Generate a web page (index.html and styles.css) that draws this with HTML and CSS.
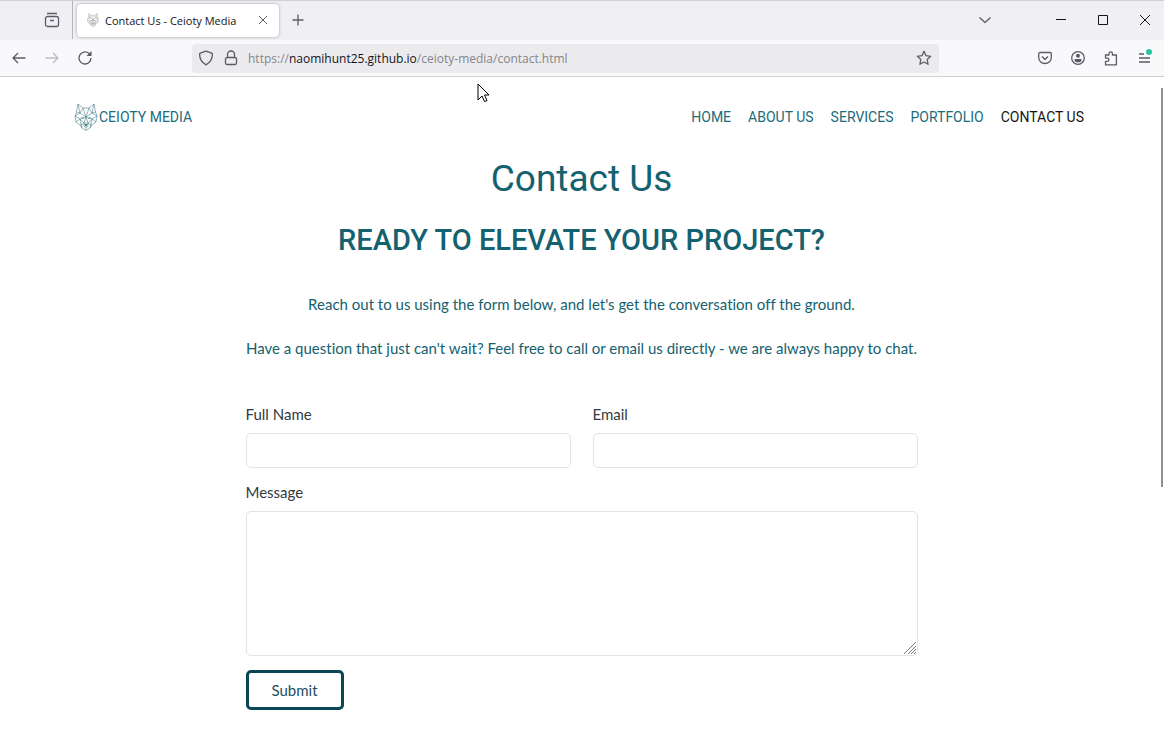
FILE: index.html
```html
<!DOCTYPE html>
<html lang="en">
<head>
<meta charset="utf-8">
<meta name="viewport" content="width=device-width, initial-scale=1">
<title>Contact Us - Ceioty Media</title>
<link rel="stylesheet" href="styles.css">
</head>
<body>
<svg class="symbols" aria-hidden="true">
  <symbol id="wolf" viewBox="0 0 24 28">
    <path d="M4 1 9 5h6l5-4 1.500 8 1.500 4-1 6-4 3-2 3-4 2.500L8 25l-2-3-4-3-1-6 1.500-4zM4 1l2 9 6 4 6-4 2-9M2.500 9l3.500 1-5 3 5 3 6-2 6 2 5-3-5-3 3.500-1M9 5l3 9 3-9M2 19l4-3 2 9M22 19l-4-3-2 9M6 16l4 4M18 16l-4 4M12 14l-2 6v3l2 2 2-2v-3zM10 20h4M12 25v2M6 10l3-5M18 10l-3-5M6 22l4-2M18 22l-4-2" fill="none" stroke="currentColor" stroke-width=".6" stroke-linejoin="round"/>
    <path d="m7 14 3 1-1 1zM17 14l-3 1 1 1zM10 21h4l-2 3z" fill="currentColor"/>
  </symbol>
</svg>

<header class="browser">
  <div class="tabstrip">
    <div class="tabstrip-start">
      <button class="icon-button" aria-label="Firefox View">
        <svg width="16" height="16" viewBox="0 0 16 16"><path d="M3 1.500h10M3.500 4.500h9a2 2 0 0 1 2 2v6a2 2 0 0 1-2 2h-9a2 2 0 0 1-2-2v-6a2 2 0 0 1 2-2zM6 8.500h4"/></svg>
      </button>
    </div>
    <div class="tab">
      <svg class="tab-favicon" width="12" height="14"><use href="#wolf"/></svg>
      <span class="tab-title">Contact Us - Ceioty Media</span>
      <button class="icon-button tab-close" aria-label="Close tab">
        <svg width="10" height="10" viewBox="0 0 10 10"><path d="m1 1 8 8M9 1 1 9"/></svg>
      </button>
    </div>
    <button class="icon-button new-tab" aria-label="New tab">
      <svg width="12" height="12" viewBox="0 0 12 12"><path d="M6 .5v11M.5 6h11"/></svg>
    </button>
    <div class="window-controls">
      <button class="icon-button tab-list" aria-label="List all tabs">
        <svg width="12" height="12" viewBox="0 0 12 12"><path d="m.5 3.500 5.500 5 5.500-5"/></svg>
      </button>
      <button class="icon-button caption" aria-label="Minimize"><svg width="10" height="10" viewBox="0 0 10 10"><path d="M0 4.500h10"/></svg></button>
      <button class="icon-button caption" aria-label="Maximize"><svg width="10" height="10" viewBox="0 0 10 10"><path d="M.5.5h9v9h-9z"/></svg></button>
      <button class="icon-button caption" aria-label="Close window"><svg width="10" height="10" viewBox="0 0 10 10"><path d="m0 0 10 10M10 0 0 10"/></svg></button>
    </div>
  </div>

  <div class="toolbar">
    <div class="toolbar-nav">
      <button class="icon-button" aria-label="Back"><svg width="16" height="16" viewBox="0 0 16 16"><path d="M14.500 8H2M7 3 2 8l5 5"/></svg></button>
      <button class="icon-button" aria-label="Forward" disabled><svg width="16" height="16" viewBox="0 0 16 16"><path d="M1.500 8H14M9 3l5 5-5 5"/></svg></button>
      <button class="icon-button" aria-label="Reload"><svg width="16" height="16" viewBox="0 0 16 16"><path d="M14 8a6 6 0 1 1-2-4.500l2 2"/><path class="solid" d="M14.500 1v5h-5z"/></svg></button>
    </div>
    <div class="urlbar">
      <svg class="icon" width="16" height="16" viewBox="0 0 16 16"><path d="m8 1.200 5.700 2c.4.200.7.500.7.900 0 5-2 8.500-6.400 10.700C3.600 12.600 1.600 9.100 1.600 4.100c0-.4.300-.7.700-.9z"/></svg>
      <svg class="icon" width="16" height="16" viewBox="0 0 16 16"><path d="M4.500 7.500V4.500a3.500 3.500 0 0 1 7 0v3M4 7.500h8a1.500 1.500 0 0 1 1.500 1.500v4a1.500 1.500 0 0 1-1.500 1.500H4A1.500 1.500 0 0 1 2.500 13V9A1.500 1.500 0 0 1 4 7.500z"/></svg>
      <div class="url" role="textbox" contenteditable="true" spellcheck="false" aria-label="Address">https://<span class="url-domain">naomihunt25.github.io</span>/ceioty-media/contact.html</div>
      <button class="icon-button star" aria-label="Bookmark this page"><svg width="16" height="16" viewBox="0 0 16 16"><path d="m8 1.300 2 4.400 4.700.6-3.500 3.200.9 4.800L8 12l-4.100 2.300.9-4.800L1.300 6.300l4.700-.6z"/></svg></button>
    </div>
    <div class="toolbar-end">
      <button class="icon-button" aria-label="Save to Pocket"><svg width="14" height="14" viewBox="0 0 14 14"><path d="M2 1.500h10a1.300 1.300 0 0 1 1.300 1.300V6.500a6.300 6 0 0 1-12.600 0V2.800A1.300 1.300 0 0 1 2 1.500zM4 5.500l3 3 3-3"/></svg></button>
      <button class="icon-button" aria-label="Account"><svg width="14" height="14" viewBox="0 0 14 14"><circle cx="7" cy="7" r="6.300"/><circle class="solid" cx="7" cy="4.800" r="2"/><path class="solid" d="M3.500 8h7v1a3.500 2.300 0 0 1-7 0z"/></svg></button>
      <button class="icon-button" aria-label="Extensions"><svg width="14" height="15" viewBox="0 0 14 15"><path d="M5 4V2.500a1.700 1.700 0 0 1 3.400 0V4h4v9.800H1.500v-3.500h1.800a1.600 1.600 0 0 0 0-3.200H1.500V4z"/></svg></button>
      <button class="icon-button menu" aria-label="Open application menu"><svg width="14" height="14" viewBox="0 0 14 14"><path d="M2 3h5M2 7h11M2 11h11"/></svg><span class="menu-badge"></span></button>
    </div>
  </div>
</header>

<div class="page">
  <nav class="site-nav">
    <a class="brand" href="#"><svg width="24" height="28"><use href="#wolf"/></svg><span>CEIOTY MEDIA</span></a>
    <div class="site-links">
      <a href="#">HOME</a>
      <a href="#">ABOUT US</a>
      <a href="#">SERVICES</a>
      <a href="#">PORTFOLIO</a>
      <a href="#" class="current" aria-current="page">CONTACT US</a>
    </div>
  </nav>

  <main class="content">
    <h1>Contact Us</h1>
    <h2>READY TO ELEVATE YOUR PROJECT?</h2>
    <p>Reach out to us using the form below, and let's get the conversation off the ground.</p>
    <p>Have a question that just can't wait? Feel free to call or email us directly - we are always happy to chat.</p>

    <form class="contact-form">
      <div class="field">
        <label for="name">Full Name</label>
        <input id="name" type="text">
      </div>
      <div class="field">
        <label for="email">Email</label>
        <input id="email" type="email">
      </div>
      <div class="field field-wide">
        <label for="message">Message</label>
        <div class="message-box">
          <textarea id="message"></textarea>
          <svg class="grip" width="14" height="14" viewBox="0 0 14 14"><path d="M1 13 13 1M5 13l8-8M8 13l5-5M11 13l2-2"/></svg>
        </div>
      </div>
      <button class="submit" type="submit">Submit</button>
    </form>
  </main>
  <div class="scroll-thumb"></div>
</div>

<svg class="pointer" width="13" height="20" viewBox="0 0 13 20"><path d="M1 1v16l4-4 2.500 5.500 2.500-1L7.500 12H12z"/></svg>
</body>
</html>
```
FILE: styles.css
```css
* { box-sizing: border-box; }

body {
  margin: 0;
  min-height: 100vh;
  display: flex;
  flex-direction: column;
  background: #fff;
  font-family: "Lato", sans-serif;
  font-variant-ligatures: none;
}

.symbols { position: absolute; width: 0; height: 0; }

/* Browser window */
.browser {
  font-family: "Open Sans", sans-serif;
  font-size: 12px;
  color: #15141a;
  border-top: 1px solid #cfcfd4;
  border-bottom: 1px solid #cfcfd3;
}

.icon-button {
  display: inline-flex;
  align-items: center;
  justify-content: center;
  padding: 0;
  border: 0;
  background: none;
  color: #5b5b66;
}
.icon-button:disabled { color: #bcbcc2; }

.icon-button svg,
.icon {
  flex: none;
  fill: none;
  stroke: currentColor;
  stroke-width: 1.3;
  stroke-linejoin: round;
}
.icon-button .solid { fill: currentColor; stroke: none; }

.tabstrip {
  display: flex;
  align-items: center;
  height: 39px;
  padding-bottom: 1px;
  background: #f0f0f4;
}

.tabstrip-start {
  display: flex;
  align-items: center;
  align-self: stretch;
  justify-content: flex-end;
  width: 73px;
  padding-right: 12px;
  border-right: 1px solid #b5b5bb;
}

.tab {
  display: flex;
  align-items: center;
  gap: 6px;
  width: 202px;
  height: 33px;
  margin-left: 4px;
  padding: 0 10px;
  border-radius: 4px;
  background: #fff;
  box-shadow: 0 0 3px rgba(0, 0, 0, .35);
}
.tab-favicon { color: #777; }
.tab-title { flex: 1; font-size: 11px; white-space: nowrap; }
.tab-close { width: 12px; }
.tab-close svg { stroke-width: 1; }
.new-tab { width: 38px; }

.window-controls { display: flex; margin-left: auto; }
.tab-list { width: 42px; margin-right: 34px; }
.caption { width: 42px; color: #15141a; }
.caption svg { stroke-width: 1; }
.window-controls .caption:last-child { margin-right: -2px; }

.toolbar {
  display: flex;
  align-items: center;
  height: 36px;
  background: #f9f9fb;
}

.toolbar-nav { display: flex; width: 192px; padding-left: 11px; gap: 17px; }

.urlbar {
  display: flex;
  align-items: center;
  flex: 1;
  gap: 9px;
  height: 29px;
  padding: 0 7px 0 6px;
  border-radius: 4px;
  background: #ebebee;
  color: #5b5b66;
}
.url {
  flex: 1;
  color: #85858c;
  font-size: 12px;
  white-space: nowrap;
  outline: none;
}
.url-domain { color: #15141a; }

.toolbar-end {
  display: flex;
  justify-content: flex-end;
  align-items: center;
  gap: 19px;
  width: 225px;
  padding-right: 13px;
}
.menu { position: relative; }
.menu-badge {
  position: absolute;
  top: -2px;
  right: -1px;
  width: 6px;
  height: 6px;
  border-radius: 50%;
  background: #2ac3a2;
}

/* Site */
.page { position: relative; flex: 1; padding: 24px 75px 24px 74px; }

.site-nav {
  display: flex;
  align-items: center;
  justify-content: space-between;
  padding-right: 5px;
  font-family: "Roboto", sans-serif;
  font-size: 14px;
  line-height: 32px;
}
.site-nav a { color: #1b6c7c; text-decoration: none; }
.brand { display: flex; align-items: center; gap: 1px; }
.brand svg { color: #4d858c; }
.site-links { display: flex; gap: 17px; }
.site-nav .current { color: #151515; }

.content {
  max-width: 674px;
  margin: 0 auto;
  text-align: center;
  color: #14616f;
}

h1, h2 { margin: 0; font-family: "Roboto", sans-serif; }
h1 { margin-top: 22px; font-size: 37px; line-height: 48px; font-weight: 400; }
h2 { margin: 17px 0 32px; font-size: 29px; line-height: 40px; font-weight: 500; }
p { margin: 0 0 20px; font-size: 15px; line-height: 24px; }

.contact-form {
  display: grid;
  grid-template-columns: 1fr 1fr;
  gap: 12px 22px;
  margin-top: 42px;
  padding: 0 1px;
  text-align: left;
  color: #343a40;
  font-size: 15px;
}
.field { display: flex; flex-direction: column; gap: 7px; line-height: 24px; }
.field-wide { grid-column: 1 / -1; }

.field input,
.field textarea {
  display: block;
  width: 100%;
  padding: 6px 12px;
  border: 1px solid #e0e4e7;
  border-radius: 5px;
  background: #fff;
  font: inherit;
}
.field input { height: 35px; }
.message-box { position: relative; }
.field textarea { height: 145px; resize: none; }
.grip {
  position: absolute;
  right: 1px;
  bottom: 1px;
  fill: none;
  stroke: #777;
  stroke-width: 1;
}

.submit {
  justify-self: start;
  margin-top: 2px;
  padding: 5px 23px;
  border: 3px solid #0b4654;
  border-radius: 5px;
  background: #fff;
  color: #1d5062;
  font: inherit;
  font-size: 15px;
  line-height: 24px;
}

.scroll-thumb {
  position: absolute;
  top: 11px;
  right: 1px;
  width: 2px;
  height: 399px;
  background: #8f8f8f;
}

.pointer {
  position: absolute;
  left: 477px;
  top: 83px;
  fill: #fff;
  stroke: #000;
}
```
